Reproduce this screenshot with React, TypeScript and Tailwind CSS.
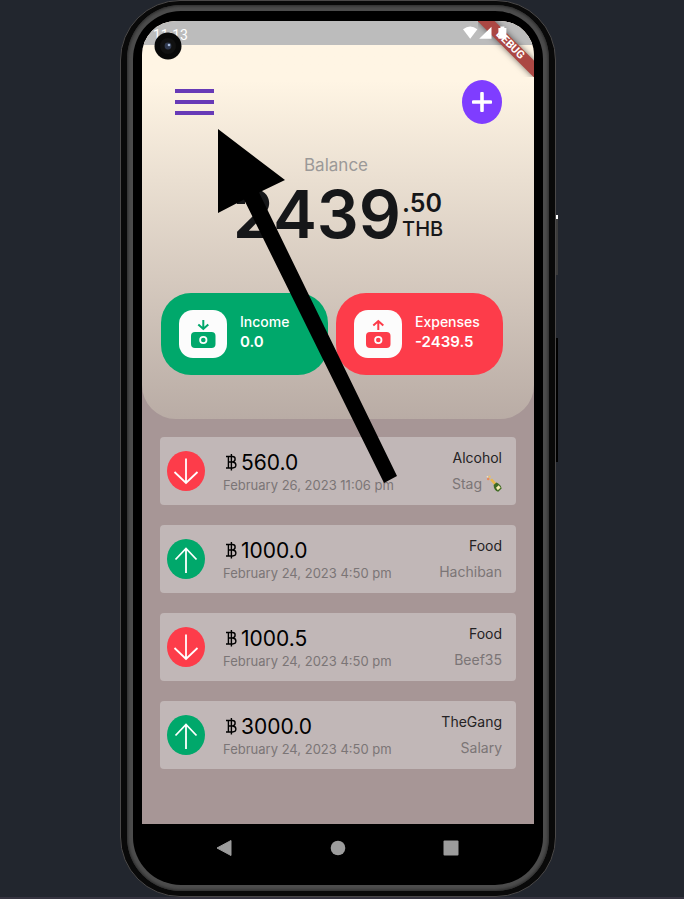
import React from "react";

type Entry = {
  amount: string;
  date: string;
  category: string;
  note: string;
  direction: "up" | "down";
  bottle?: boolean;
};

const entries: Entry[] = [
  { amount: "560.0", date: "February 26, 2023 11:06 pm", category: "Alcohol", note: "Stag", direction: "down", bottle: true },
  { amount: "1000.0", date: "February 24, 2023 4:50 pm", category: "Food", note: "Hachiban", direction: "up" },
  { amount: "1000.5", date: "February 24, 2023 4:50 pm", category: "Food", note: "Beef35", direction: "down" },
  { amount: "3000.0", date: "February 24, 2023 4:50 pm", category: "TheGang", note: "Salary", direction: "up" },
];

function Bottle() {
  return (
    <svg viewBox="0 0 16 18" className="h-[18px] w-4" aria-label="Champagne">
      <path d="M4 5 L6 3.6 L10.6 8.4 L8.6 10.2 Z" fill="#e9b84c" />
      <path d="M7.6 10 L10.4 7.4 C13 8.2 15.4 11 15.6 13.6 L12.2 16.8 C9.4 16 7.6 13.6 7.6 10 Z" fill="#3f6b22" />
      <path d="M10 12.8 L12.8 10.2 L14.6 12.8 L11.8 15.2 Z" fill="#f8ecb4" />
      <circle cx="2.2" cy="4" r="1.3" fill="#e98a5b" />
      <circle cx="3.6" cy="1.6" r="1.1" fill="#f0c060" />
      <circle cx="1.4" cy="1.8" r="0.8" fill="#f6e3c0" />
    </svg>
  );
}

function DirectionBadge({ direction }: { direction: "up" | "down" }) {
  const up = direction === "up";
  return (
    <svg viewBox="0 0 38 40" className="h-10 w-[38px] shrink-0" aria-hidden="true">
      <ellipse cx="19" cy="20" rx="19" ry="20" fill={up ? "#00a86b" : "#fd3c4a"} />
      <path
        d={up ? "M19 34 V9.5 M8.5 20.5 L19 9.5 L29.5 20.5" : "M19 7.5 V32 M7.5 21 L19 32 L30.5 21"}
        fill="none"
        stroke="#fff"
        strokeWidth="1.8"
      />
    </svg>
  );
}

function EntryCard({ entry }: { entry: Entry }) {
  return (
    <li className="flex h-[68px] items-center rounded bg-[#c1b7b7] pl-[7px] pr-[14px]">
      <DirectionBadge direction={entry.direction} />
      <div className="ml-[18px] flex flex-1 flex-col pt-1 whitespace-nowrap">
        <span className="flex items-center gap-1 pl-[3px] text-[21px] leading-6 text-black">
          <svg viewBox="0 0 11 18" className="h-[18px] w-[11px]" role="img" aria-label="Baht">
            <path d="M0 2.5 H6.5 C10 2.5 10 7.5 6.5 8 H2.4 M6.5 8 C11 8.3 11 14 6.5 14 H0 M2.4 2.5 V14 M5.4 0 V16.5" fill="none" stroke="#000" strokeWidth="1.4" />
          </svg>
          {entry.amount}
        </span>
        <span className="text-[13px] leading-5 text-[#7b7576]">{entry.date}</span>
      </div>
      <div className="flex flex-col items-end gap-[6px] pb-px text-sm leading-5 whitespace-nowrap">
        <span className="text-[#242224]">{entry.category}</span>
        <span className="flex items-center gap-1 text-[#7b7576]">
          {entry.note}
          {entry.bottle && <Bottle />}
        </span>
      </div>
    </li>
  );
}

function Summary({ label, value, income }: { label: string; value: string; income?: boolean }) {
  const color = income ? "#00a86b" : "#fd3c4a";
  return (
    <section className={`flex h-[82px] flex-1 items-center rounded-[30px] pl-[18px] text-white ${income ? "bg-[#00a86b]" : "bg-[#fd3c4a]"}`}>
      <span className="flex size-12 shrink-0 items-center justify-center rounded-[14px] bg-[#fcfcfc]">
        <svg viewBox="0 0 48 48" className="size-12" aria-hidden="true">
          <rect x="12" y="22" width="24.5" height="16" rx="4" fill={color} />
          <circle cx="24.3" cy="30" r="3.2" fill="none" stroke="#fcfcfc" strokeWidth="1.8" />
          <path d={income ? "M24.3 10 V19 M19.3 14.4 L24.3 19 L29.3 14.4" : "M24.3 20 V11 M19.3 15.6 L24.3 11 L29.3 15.6"} fill="none" stroke={color} strokeWidth="2" />
        </svg>
      </span>
      <div className="ml-[13px] flex flex-col pb-1 whitespace-nowrap">
        <span className="text-sm leading-5 font-medium">{label}</span>
        <span className="text-[15px] leading-5 font-semibold">{value}</span>
      </div>
    </section>
  );
}

function StatusBar() {
  return (
    <div className="flex h-6 items-center justify-between bg-[#bcbcbc] pl-[11px] pr-[27px] font-[Roboto,sans-serif] text-sm text-white">
      <time className="pt-[3px]">11:13</time>
      <svg viewBox="0 0 44 14" className="relative z-10 h-[14px] w-11" aria-hidden="true">
        <path d="M0 3.2 Q7.2 -2 14.4 3.2 L7.2 12.8 Z M28.5 0.8 V12.8 H16.2 Z M35.4 2 V12.8 H43.4 V2 H41.4 V0.6 H37.4 V2 Z" fill="#fff" />
      </svg>
    </div>
  );
}

function DebugBanner() {
  return (
    <div className="absolute top-0 right-0 size-14 overflow-hidden">
      <div className="absolute top-[18px] -left-2 h-3 w-20 rotate-45 bg-[#ab4743] text-center font-[Roboto,sans-serif] text-[11px] leading-3 font-bold text-white shadow-[0_0_6px_rgba(0,0,0,0.55)]">
        DEBUG
      </div>
    </div>
  );
}

function Pointer() {
  return (
    <svg viewBox="0 0 180 356" className="pointer-events-none absolute top-[127px] left-24 h-[356px] w-[180px]" aria-hidden="true">
      <path d="M1 1 L68 52 L42 64.5 L180 348 L167 355 L27 71.5 L1 85 Z" fill="#000" />
    </svg>
  );
}

export default function App() {
  return (
    <main className="flex min-h-screen items-start justify-center overflow-hidden border-b-2 border-[#363440] bg-[#22262e] pr-2 font-[Inter,'Liberation_Sans',sans-serif]">
      <div className="relative w-full max-w-[436px] rounded-[60px] border border-[#4a4848] bg-[#090909] px-[6px] pt-1 pb-[5px]">
        <span className="absolute top-[214px] -right-[3px] h-[60px] w-[2px] border-t-4 border-white bg-[#3b3b3b]" />
        <span className="absolute top-[337px] -right-[3px] h-[124px] w-[2px] bg-black" />
        <div className="rounded-[54px] bg-[#4c4c4c] p-[6px] shadow-[inset_0_0_3px_1px_#2a2a2a]">
          <div className="rounded-[48px] bg-black px-[9px] pt-[10px]">
            <div className="relative overflow-hidden rounded-t-[34px] bg-[#a79696]">
              <header className="overflow-hidden rounded-b-[34px] bg-linear-to-b from-[#fff5e4] from-15% to-[#b9aca5]">
                <StatusBar />
                <div className="flex items-center justify-between pt-[35px] pr-8 pl-[33px]">
                  <button aria-label="Menu" className="flex w-[39px] flex-col gap-[7px]">
                    <span className="h-1 w-full bg-[#673ab7]" />
                    <span className="h-1 w-full bg-[#673ab7]" />
                    <span className="h-1 w-full bg-[#673ab7]" />
                  </button>
                  <button aria-label="Add" className="flex h-11 w-10 items-center justify-center rounded-[50%] bg-[#7f3dff]">
                    <svg viewBox="0 0 20 20" className="size-5" aria-hidden="true">
                      <path d="M10 1.5 V18.5 M1.5 10 H18.5" stroke="#fff" strokeWidth="3.6" strokeLinecap="round" />
                    </svg>
                  </button>
                </div>
                <p className="mt-[29px] pr-1 text-center text-[17px] leading-6 text-[#9b9998]">Balance</p>
                <div className="mt-[6px] flex h-[62px] items-center justify-center gap-px font-semibold text-[#161719]">
                  <span className="text-[66px] leading-[60px]">2439</span>
                  <span className="flex flex-col pt-1 text-[20px] leading-[26px] font-medium">
                    <span className="text-[25px] font-semibold">.50</span>
                    <span>THB</span>
                  </span>
                </div>
                <div className="mt-12 mb-11 flex gap-2 pr-[31px] pl-[19px]">
                  <Summary label="Income" value="0.0" income />
                  <Summary label="Expenses" value="-2439.5" />
                </div>
              </header>
              <ul className="flex flex-col gap-5 px-[18px] pt-[18px] pb-[55px]">
                {entries.map((entry) => (
                  <EntryCard key={entry.amount} entry={entry} />
                ))}
              </ul>
              <DebugBanner />
            </div>
            <nav className="flex h-[61px] items-start justify-between pt-4 pr-[75px] pl-[74px]" aria-label="System">
              <button aria-label="Back">
                <svg viewBox="0 0 16 16" className="size-4"><path d="M15 0.5 V15.5 L1 8 Z" fill="#9c9c9c" stroke="#9c9c9c" /></svg>
              </button>
              <button aria-label="Home">
                <svg viewBox="0 0 16 16" className="size-4"><circle cx="8" cy="8" r="7.3" fill="#9c9c9c" /></svg>
              </button>
              <button aria-label="Recent apps">
                <svg viewBox="0 0 16 16" className="size-4"><rect x="0.5" y="0.5" width="15" height="15" rx="1" fill="#9c9c9c" /></svg>
              </button>
            </nav>
          </div>
        </div>
        <svg viewBox="0 0 28 28" className="absolute top-[31px] left-[33px] size-7" aria-hidden="true">
          <circle cx="14" cy="14" r="13.5" fill="#080808" />
          <circle cx="14" cy="14" r="8" fill="#111" />
          <circle cx="14" cy="14" r="3.4" fill="#30394f" />
          <circle cx="15" cy="13" r="1.3" fill="#a9bedd" />
        </svg>
        <Pointer />
      </div>
    </main>
  );
}
